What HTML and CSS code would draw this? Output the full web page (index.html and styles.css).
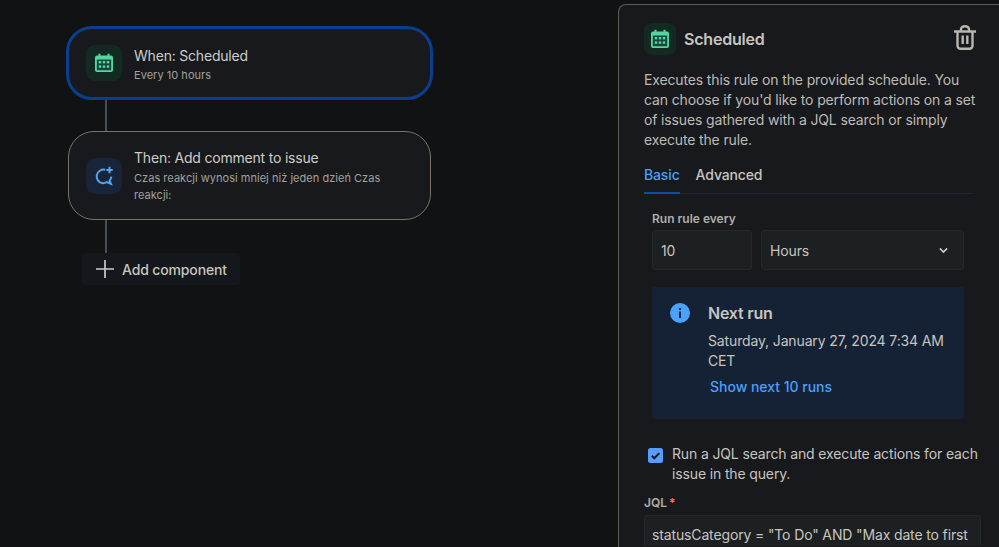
FILE: index.html
```html
<!DOCTYPE html>
<html lang="en">
<head>
<meta charset="utf-8">
<title>Scheduled rule</title>
<link rel="stylesheet" href="styles.css">
</head>
<body>
<svg class="defs" width="0" height="0" aria-hidden="true">
  <symbol id="cal" viewBox="0 0 20 20">
    <path d="M5.500 .8v3M14.500 .8v3" fill="none" stroke="currentColor" stroke-width="2"/>
    <rect x="1" y="2.500" width="18" height="16.500" rx="2" fill="currentColor"/>
    <rect x="2.800" y="6.400" width="14.400" height="10.800" rx=".6" fill="#17493a"/>
    <g fill="currentColor">
      <rect x="4.800" y="8" width="2.400" height="2.400"/><rect x="8.800" y="8" width="2.400" height="2.400"/><rect x="12.800" y="8" width="2.400" height="2.400"/>
      <rect x="4.800" y="12.400" width="2.400" height="2.400"/><rect x="8.800" y="12.400" width="2.400" height="2.400"/><rect x="12.800" y="12.400" width="2.400" height="2.400"/>
    </g>
  </symbol>
</svg>
<main class="canvas">
  <section class="rule rule-active">
    <div class="tile tile-green"><svg class="tile-icon"><use href="#cal"/></svg></div>
    <div class="rule-text">
      <div class="rule-title">When: Scheduled</div>
      <div class="rule-sub">Every 10 hours</div>
    </div>
  </section>
  <div class="link"></div>
  <section class="rule rule-plain">
    <div class="tile tile-blue">
      <svg class="tile-icon" viewBox="0 0 20 20" fill="none" stroke="#4fa6f5" stroke-width="2">
        <path d="M11.200 3.700A7 6.700 0 1 0 8.500 17.200c1.500 0 3-.3 4.200-1l4.300 1.800-1.400-3.400c1-1.100 1.500-2.500 1.700-4"/>
        <path d="M15.500 .8v6.400M12.300 4h6.400"/>
      </svg>
    </div>
    <div class="rule-text">
      <div class="rule-title">Then: Add comment to issue</div>
      <div class="rule-sub">Czas reakcji wynosi mniej niż jeden dzień Czas reakcji:</div>
    </div>
  </section>
  <div class="link link-last"></div>
  <button class="add" type="button">
    <svg class="add-icon" viewBox="0 0 18 18" fill="none" stroke="#c7c9cb" stroke-width="1.700"><path d="M9 0v18M0 9h18"/></svg>
    Add component
  </button>
</main>
<aside class="panel">
  <header class="panel-head">
    <div class="tile tile-green"><svg class="tile-icon"><use href="#cal"/></svg></div>
    <h1 class="panel-title">Scheduled</h1>
    <svg class="trash" viewBox="0 0 22 25" fill="none" stroke="#b8b6ad" stroke-width="2.400">
      <path d="M0 6.500h22M7 5.500V4.200a4 3 0 0 1 8 0v1.300"/>
      <path d="M3.500 6.500v14.300a3 3 0 0 0 3 3h9a3 3 0 0 0 3-3V6.500"/>
      <path d="M8.700 10.500v8.500M13.300 10.500v8.500"/>
    </svg>
  </header>
  <p class="desc">Executes this rule on the provided schedule. You can choose if you'd like to perform actions on a set of issues gathered with a JQL search or simply execute the rule.</p>
  <nav class="tabs">
    <span class="tab tab-on">Basic</span>
    <span class="tab">Advanced</span>
  </nav>
  <div class="form">
    <div class="label">Run rule every</div>
    <div class="fields">
      <div class="field field-num">10</div>
      <div class="field field-select">Hours
        <svg class="chev" viewBox="0 0 10 7" fill="none" stroke="#c7c9cb" stroke-width="1.800"><path d="M1 1.200l4 4 4-4"/></svg>
      </div>
    </div>
    <div class="info">
      <svg class="info-icon" viewBox="0 0 20 20"><circle cx="10" cy="10" r="10" fill="#4aa3fa"/><rect x="9" y="8.500" width="2" height="6.500" fill="#16233a"/><rect x="9" y="5" width="2" height="2" fill="#16233a"/></svg>
      <div class="info-body">
        <div class="info-title">Next run</div>
        <div class="info-date">Saturday, January 27, 2024 7:34 AM CET</div>
        <a class="info-link">Show next 10 runs</a>
      </div>
    </div>
    <div class="check">
      <svg class="check-box" viewBox="0 0 15 15"><rect width="15" height="15" rx="2.500" fill="#579dff"/><path d="M3.800 7.800l2.500 2.500 5-5.200" fill="none" stroke="#161a1d" stroke-width="2"/></svg>
      <span class="check-text">Run a JQL search and execute actions for each issue in the query.</span>
    </div>
  </div>
  <div class="jql-label">JQL<span class="req">*</span></div>
  <div class="jql">statusCategory = "To Do" AND "Max date to first</div>
</aside>
</body>
</html>
```
FILE: styles.css
```css
* { box-sizing: border-box; }
html, body { height: 100%; }
body {
  margin: 0;
  display: flex;
  overflow: hidden;
  background: #111214;
  color: #c7c5bf;
  font-family: Inter, "Liberation Sans", sans-serif;
  font-size: 14px;
  letter-spacing: -.14px;
}
.defs { position: absolute; }
.canvas {
  width: 618px;
  flex: none;
  padding: 26px 0 0 66px;
}
.rule {
  display: flex;
  background: #17191d;
  border-radius: 26px;
}
.rule-active {
  width: 367px;
  height: 74px;
  border: 3px solid #0a3f8f;
  padding: 16px 17px;
  align-items: flex-start;
}
.rule-plain {
  width: 363px;
  height: 89px;
  margin-left: 2px;
  border: 1px solid #77736a;
  padding: 13px 17px;
  align-items: center;
}
.tile {
  width: 36px;
  height: 36px;
  flex: none;
  border-radius: 9px;
  display: flex;
  align-items: center;
  justify-content: center;
}
.tile-green { background: #132a23; color: #55d6a0; }
.tile-blue { background: #182538; }
.tile-icon { width: 20px; height: 20px; }
.rule-text { margin-left: 12px; min-width: 0; }
.rule-title { font-size: 14px; line-height: 22px; color: #cfcdc7; letter-spacing: -.2px; }
.rule-sub { font-size: 11px; line-height: 17px; color: #a3a19b; letter-spacing: .03px; }
.rule-plain .rule-sub { margin-top: 1px; }
.link { width: 2px; height: 31px; margin-left: 39px; background: #454f59; }
.link-last { height: 33px; }
.add {
  display: flex;
  align-items: center;
  gap: 8px;
  width: 158px;
  height: 32px;
  margin-left: 16px;
  padding: 0 0 0 14px;
  border: 0;
  border-radius: 4px;
  background: #14181c;
  color: #c7c5bf;
  font: 500 14px Inter, "Liberation Sans", sans-serif;
  letter-spacing: -.14px;
}
.add-icon { width: 18px; height: 18px; }
.panel {
  flex: 1;
  height: 543px;
  margin-top: 4px;
  padding: 18px 18px 0 25px;
  background: #17191d;
  border: 1px solid #5f5c55;
  border-width: 1px 0 0 1px;
  border-top-left-radius: 8px;
  overflow: hidden;
}
.panel-head { display: flex; align-items: center; height: 32px; }
.panel .tile { width: 32px; height: 32px; border-radius: 8px; }
.panel-title { margin: 0 0 0 8px; font-size: 16px; font-weight: 600; color: #c7c5bf; flex: 1; letter-spacing: -.2px; }
.trash { width: 22px; height: 25px; margin: -3px 5px 0 0; }
.desc { margin: 15px 0 0; font-size: 14px; line-height: 20px; color: #bdbbb5; }
.tabs {
  display: flex;
  gap: 16px;
  margin: 14px 8px 0 0;
  height: 30px;
  border-bottom: 1px solid #1c2630;
}
.tab { font-size: 14px; font-weight: 500; line-height: 20px; padding-top: 1px; height: 30px; }
.tab-on { color: #4c9ffa; border-bottom: 2px solid #0c4da8; }
.form { padding: 17px 17px 0 8px; }
.label { font-size: 12px; font-weight: 600; line-height: 16px; color: #b0aea8; letter-spacing: 0; }
.fields { display: flex; gap: 9px; margin-top: 3px; }
.field {
  height: 40px;
  background: #1d2023;
  border: 1px solid #22282e;
  border-radius: 3px;
  display: flex;
  align-items: center;
  padding: 0 8px;
  font-size: 14px;
}
.field-num { width: 100px; flex: none; }
.field-select { flex: 1; justify-content: space-between; padding-right: 15px; }
.chev { width: 9px; height: 7px; }
.info {
  display: flex;
  margin-top: 17px;
  height: 132px;
  padding: 16px 18px;
  background: #152236;
  border-radius: 3px;
}
.info-icon { width: 20px; height: 20px; flex: none; }
.info-body { margin-left: 18px; }
.info-title { font-size: 16px; font-weight: 600; line-height: 20px; letter-spacing: -.2px; }
.info-date { margin-top: 8px; line-height: 20px; }
.info-link { display: block; margin: 6px 0 0 2px; line-height: 20px; font-weight: 500; color: #4c9ffa; letter-spacing: -.02px; }
.check { display: flex; gap: 9px; margin: 25px -16px 0 -4px; }
.check-box { width: 15px; height: 15px; flex: none; margin-top: 4px; }
.check-text { line-height: 20px; }
.jql-label { margin-top: 11px; font-size: 12px; font-weight: 600; line-height: 16px; color: #b0aea8; letter-spacing: 0; }
.req { color: #f87168; margin-left: 2px; }
.jql {
  height: 31px;
  margin-top: 4px;
  padding: 9px 7px 0;
  background: #1d2023;
  border: 1px solid #22282e;
  border-bottom: 0;
  border-radius: 3px 3px 0 0;
  line-height: 20px;
  white-space: nowrap;
  overflow: hidden;
}
```
